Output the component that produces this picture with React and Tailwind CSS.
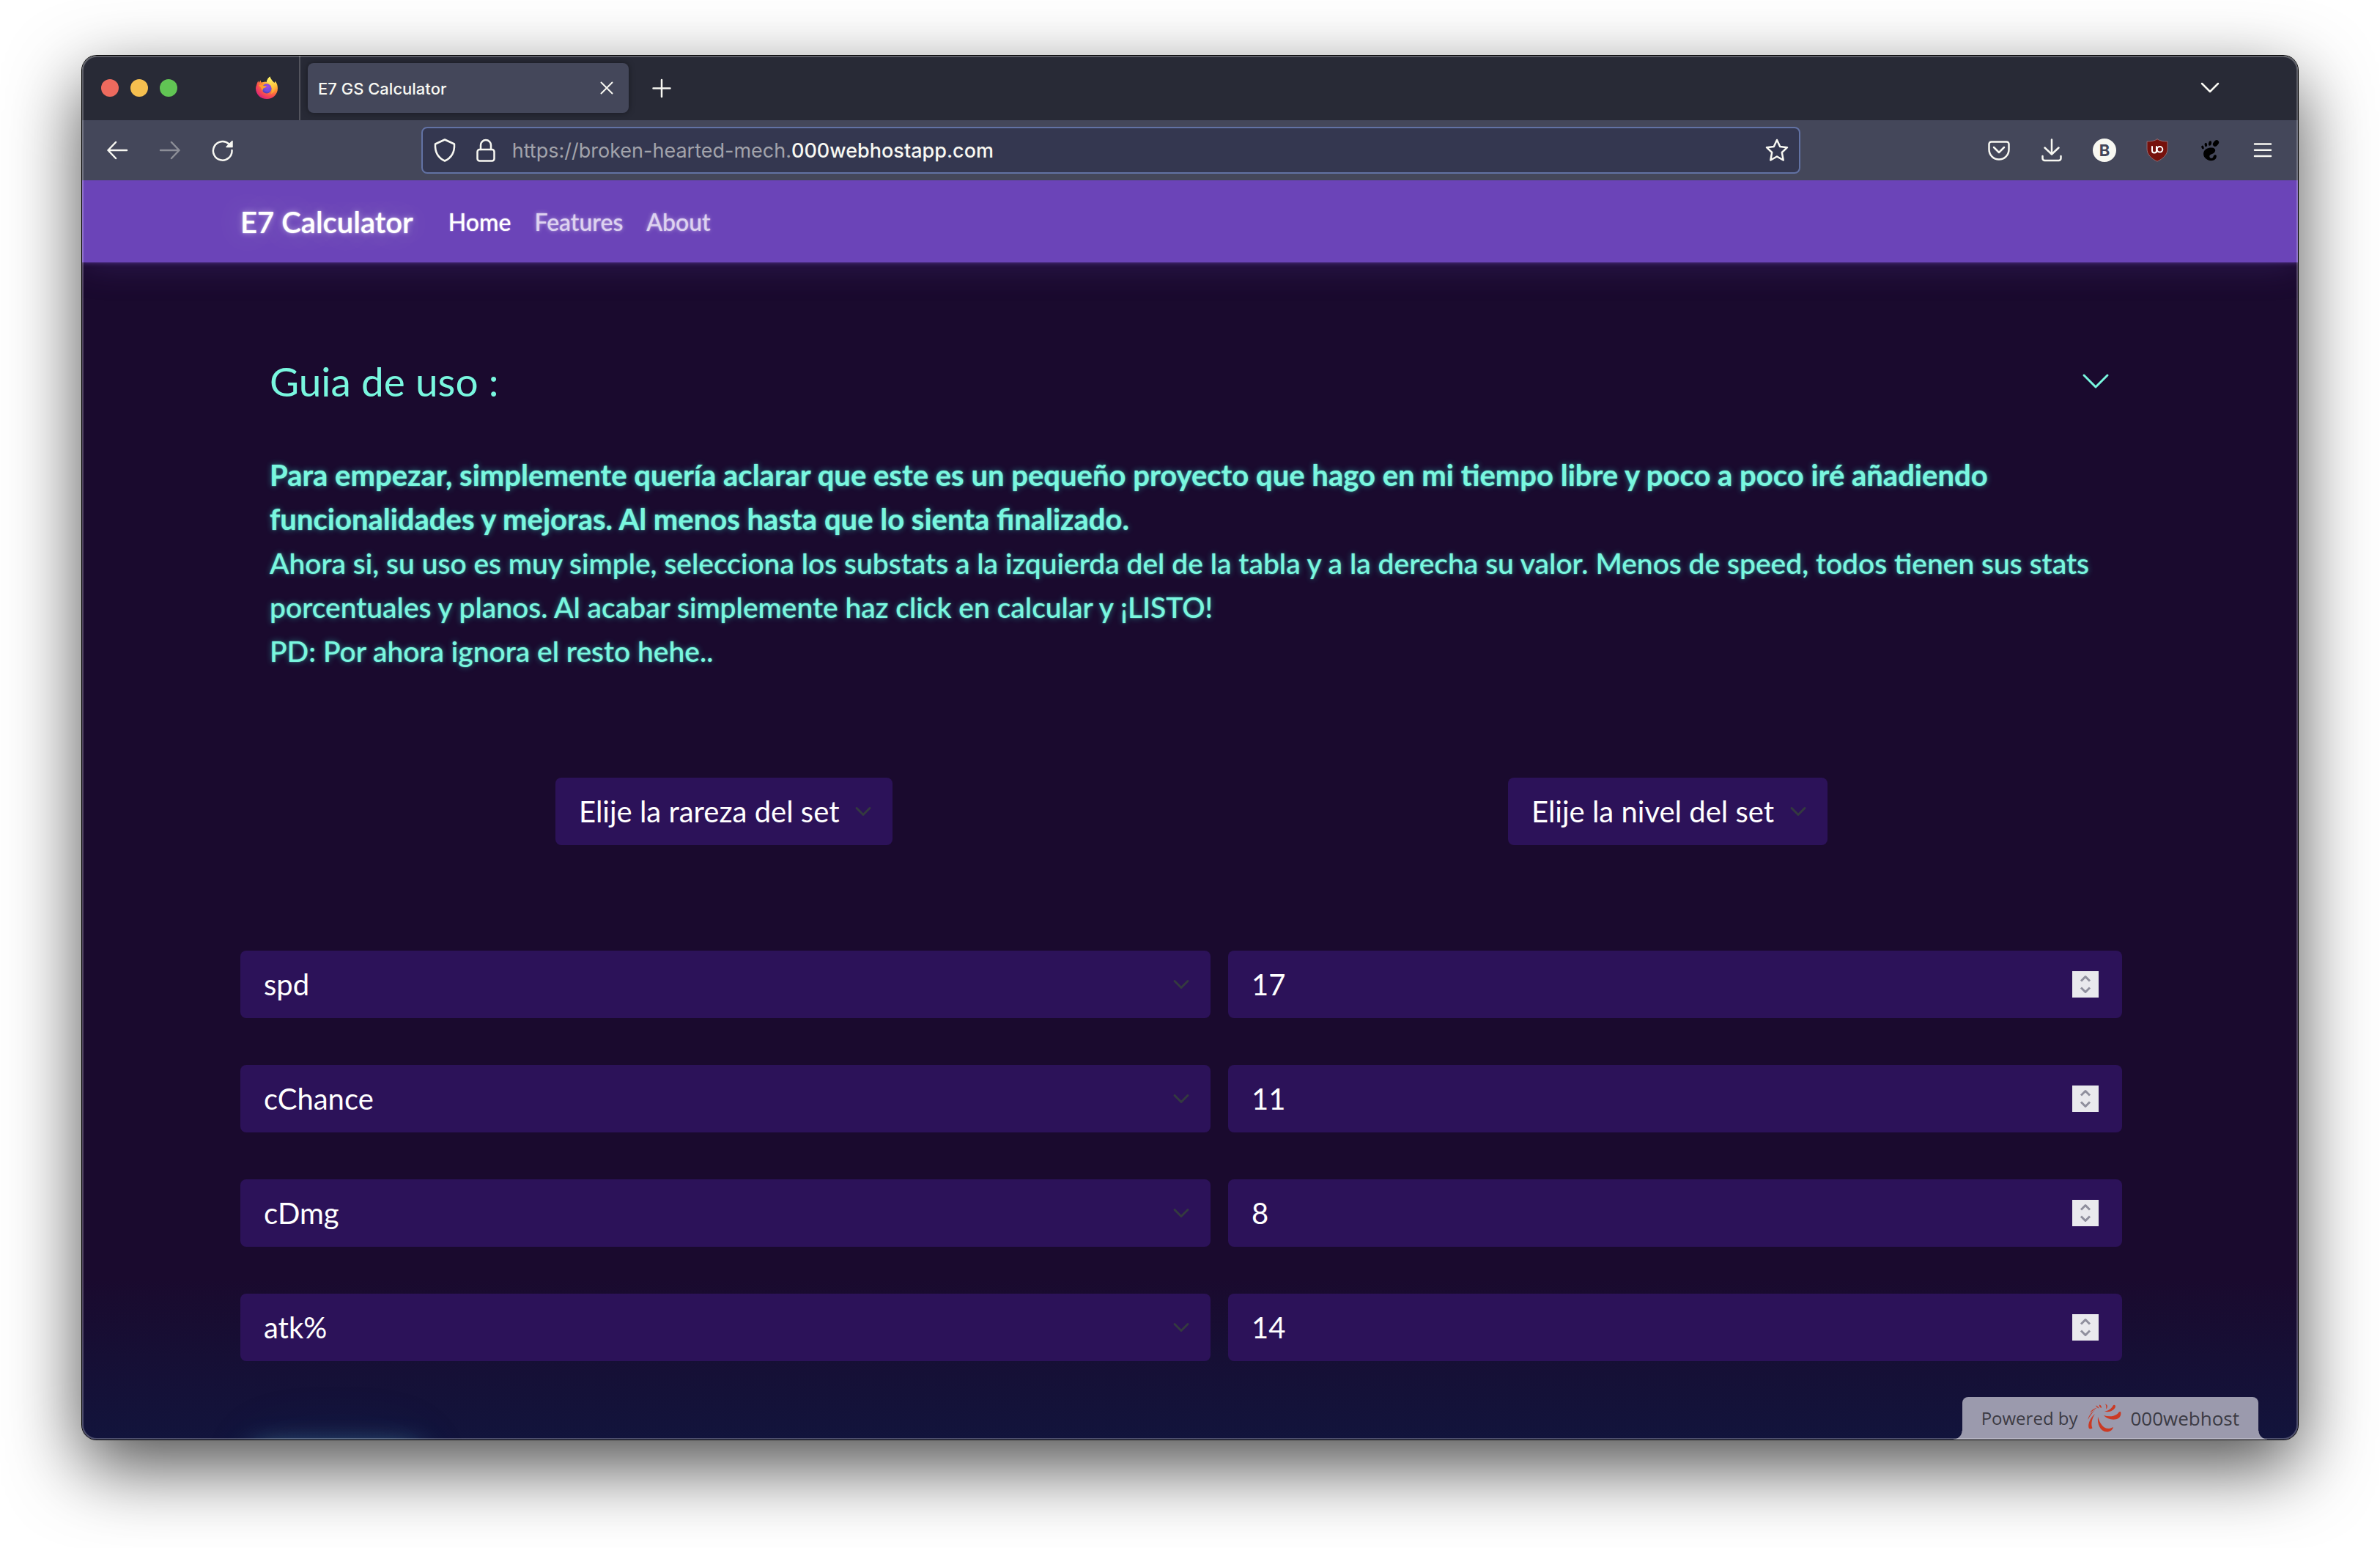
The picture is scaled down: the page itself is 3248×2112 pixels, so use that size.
import React from "react";

const ROWS = [
  { stat: "spd", value: 17 },
  { stat: "cChance", value: 11 },
  { stat: "cDmg", value: 8 },
  { stat: "atk%", value: 14 },
];

const line = {
  fill: "none",
  stroke: "currentColor",
  strokeLinecap: "round",
  strokeLinejoin: "round",
};

function Icon({ children, width = 2.5, className = "" }) {
  return (
    <svg viewBox="0 0 32 32" className={"size-8 shrink-0 " + className} {...line} strokeWidth={width} aria-hidden="true">
      {children}
    </svg>
  );
}

function FirefoxLogo() {
  return (
    <svg viewBox="0 0 32 32" className="size-8 shrink-0" role="img" aria-label="Firefox">
      <defs>
        <radialGradient id="ff-body" cx="0.78" cy="0.12" r="1">
          <stop offset="0" stopColor="#fff36b" />
          <stop offset="0.3" stopColor="#ffc53f" />
          <stop offset="0.55" stopColor="#ff8b33" />
          <stop offset="0.75" stopColor="#f84d4f" />
          <stop offset="1" stopColor="#d81f7c" />
        </radialGradient>
        <radialGradient id="ff-globe" cx="0.6" cy="0.3" r="0.8">
          <stop offset="0" stopColor="#a648e6" />
          <stop offset="0.6" stopColor="#6b4fdc" />
          <stop offset="1" stopColor="#463a9e" />
        </radialGradient>
        <linearGradient id="ff-flame" x1="0.4" y1="0" x2="0.7" y2="1">
          <stop offset="0" stopColor="#fff66b" />
          <stop offset="0.6" stopColor="#ffc83f" />
          <stop offset="1" stopColor="#ff9a33" />
        </linearGradient>
      </defs>
      <path
        d="M2 12.5 C2.6 9.6 3.4 8 4.6 6.6 L5.2 9 L7.6 5.6 L8.4 8.4 L11.4 8 C13.4 7.2 15 7.4 15.8 8 C16.4 4.600 18 2 20.400.4 C21.200 4.600 24.200 6.600 26.600 9 L27.600 6.800 C30 9.600 31 12.800 31 16.400 C31 24.800 24.400 31 16.200 31 C7.600 31 1 24.600 1 16.400 C1 15 1.400 13.600 2 12.500 Z"
        fill="url(#ff-body)"
      />
      <circle cx="16" cy="16.800" r="6.600" fill="url(#ff-globe)" />
      <path d="M15.800 8 C16.400 4.600 18 2 20.400 .4 C21.200 4.600 27.400 8.400 27.600 15 C27.700 19.400 25 23 21.600 24 C25.600 18 22.400 9.600 15.800 8 Z" fill="url(#ff-flame)" />
      <path d="M5 12.600 C7.400 10.800 10 11.600 11.800 13 L16 13.400 C15.800 15 13.600 15.600 12 16.200 C11 16.800 10.400 18.400 10.600 20 C8.400 18 8.600 15 5 12.600 Z" fill="#ff9d2f" />
    </svg>
  );
}

function TabStrip() {
  return (
    <div className="flex h-[88px] items-center bg-[#282a36] pl-[26px] text-[#f8f8f2]">
      <div className="flex gap-4">
        <button aria-label="Close window" className="size-6 rounded-full bg-[#ed6a5e]" />
        <button aria-label="Minimize window" className="size-6 rounded-full bg-[#f5bf4f]" />
        <button aria-label="Zoom window" className="size-6 rounded-full bg-[#61c554]" />
      </div>
      <button aria-label="Pinned tab" className="ml-[106px] mr-[28px]">
        <FirefoxLogo />
      </button>
      <div className="h-full w-[2px] bg-[#53545d]" />
      <div className="ml-[10px] flex h-[68px] w-[438px] items-center justify-between rounded-lg bg-[#44475a] pl-[14px] pr-[14px] shadow-[0_0_8px_rgba(0,0,0,0.4)]">
        <span className="pt-[2px] text-[22px] font-medium leading-8">E7 GS Calculator</span>
        <button aria-label="Close tab">
          <Icon width={2}>
            <path d="M8.500 8.500 L23.500 23.500 M23.500 8.500 L8.500 23.500" />
          </Icon>
        </button>
      </div>
      <button aria-label="New tab" className="ml-[29px]">
        <Icon>
          <path d="M16 5 V28 M4.500 16.500 H27.500" />
        </Icon>
      </button>
      <button aria-label="List all tabs" className="ml-auto mr-[104px]">
        <Icon>
          <path d="M5 10 L16 21 L27 10" />
        </Icon>
      </button>
    </div>
  );
}

function Toolbar() {
  return (
    <div className="flex h-[82px] items-center bg-[#44475a] pl-8 pr-8 text-[#f8f8f2]">
      <div className="flex gap-10">
        <button aria-label="Back">
          <Icon>
            <path d="M29 16 H3.500 M14 5 L3.500 16 L14 27" />
          </Icon>
        </button>
        <button aria-label="Forward" className="opacity-40" disabled>
          <Icon>
            <path d="M3 16 H28.500 M18 5 L28.500 16 L18 27" />
          </Icon>
        </button>
        <button aria-label="Reload">
          <Icon>
            <path d="M28.500 16 A12.800 12.800 0 1 1 24.500 7.500" />
            <path d="M29 3.500 V11.500 H21 Z" fill="currentColor" strokeWidth="1.500" />
          </Icon>
        </button>
      </div>
      <div className="mx-auto flex h-16 w-[63.6%] items-center rounded-lg border-2 border-[#6272a4] bg-[#343750] px-[14px]">
        <Icon className="mr-6">
          <path d="M16 1.500 L29 7.500 C29.500 17 26 26 16 30.500 C6 26 2.500 17 3 7.500 Z" />
        </Icon>
        <Icon className="mr-5">
          <rect x="4.500" y="15" width="23" height="15.500" rx="3" />
          <path d="M9 15 V9 A7 7 0 0 1 23 9 V15" />
        </Icon>
        <p className="flex-1 pt-[2px] text-[27px] leading-9 text-[#a2a3ab]">
          https://broken-hearted-mech.<span className="font-medium text-[#f8f8f2]">000webhostapp.com</span>
        </p>
        <button aria-label="Bookmark this page">
          <Icon>
            <path d="M16 2 L20.200 11 L30 12.200 L22.800 19 L24.700 29.500 L16 24.500 L7.300 29.500 L9.200 19 L2 12.200 L11.800 11 Z" />
          </Icon>
        </button>
      </div>
      <div className="flex gap-10">
        <button aria-label="Save to Pocket">
          <Icon>
            <path d="M5.500 4.500 H26.500 A3 3 0 0 1 29.500 7.500 V15 A13.500 13.500 0 0 1 2.500 15 V7.500 A3 3 0 0 1 5.500 4.500 Z M9 12 L16 19 L23 12" />
          </Icon>
        </button>
        <button aria-label="Downloads">
          <Icon>
            <path d="M16 1.500 V21 M6.500 12.500 L16 21.500 L25.500 12.500 M3.500 24 V27 A3 3 0 0 0 6.500 30 H25.500 A3 3 0 0 0 28.500 27 V24" />
          </Icon>
        </button>
        <button aria-label="Extension B" className="flex size-8 items-center justify-center rounded-full bg-[#f8f8f2] text-[22px] font-bold leading-8 text-[#44475a]">
          B
        </button>
        <button aria-label="uBlock Origin">
          <Icon>
            <path d="M16 .8 C19.500 3.200 24 4 30 4 V14 C30 22 24 27.500 16 31.200 C8 27.500 2 22 2 14 V4 C8 4 12.500 3.200 16 .8 Z" fill="#76110c" stroke="#8d6a72" strokeWidth="1" />
            <path d="M9 11 V16.500 A3 3 0 0 0 15 16.500 V11 V18.500" stroke="#fff" strokeWidth="2" />
            <circle cx="19.500" cy="14.800" r="3.800" stroke="#fff" strokeWidth="2" />
          </Icon>
        </button>
        <button aria-label="GNOME Shell integration">
          <svg viewBox="0 0 32 32" className="size-8" fill="#000" aria-hidden="true">
            <ellipse cx="24" cy="6.500" rx="3.300" ry="4.800" transform="rotate(42 24 6.500)" />
            <ellipse cx="16" cy="6.500" rx="2" ry="3.200" transform="rotate(10 16 6.500)" />
            <ellipse cx="10.400" cy="8.500" rx="1.800" ry="2.800" transform="rotate(-8 10.400 8.500)" />
            <ellipse cx="6" cy="12" rx="1.600" ry="2.500" transform="rotate(-22 6 12)" />
            <path d="M7.200 19.500 C8 14.500 14 12 19 12.600 C23.500 13.200 24.500 17 21.500 19.500 C19 21.500 15.500 21.500 15.300 24.300 C15.200 27 19 28 20.200 25.600 C21 24 21 22.300 23.300 22.300 C25.500 22.400 25 25.500 24 27.200 C22 30.500 16.500 31.200 12.600 29 C8.800 26.800 6.500 23.500 7.200 19.500 Z" />
          </svg>
        </button>
        <button aria-label="Open application menu">
          <Icon>
            <path d="M5 7.500 H27 M5 15.700 H27 M5 24 H27" />
          </Icon>
        </button>
      </div>
    </div>
  );
}

function SelectBox({ label, text, className = "", selectClassName = "" }) {
  return (
    <div className={"relative " + className}>
      <select
        aria-label={label}
        className={"block h-[92px] appearance-none rounded-lg bg-[#2c1259] pl-8 pr-[72px] text-[40px] leading-[60px] text-white " + selectClassName}
      >
        <option>{text}</option>
      </select>
      <svg viewBox="0 0 24 16" className="pointer-events-none absolute right-7 top-[38px] h-4 w-6 text-[#343a40]" {...line} strokeWidth="3" aria-hidden="true">
        <path d="M3 3.500 L12 12.500 L21 3.500" />
      </svg>
    </div>
  );
}

function NumberBox({ label, value }) {
  return (
    <div className="flex h-[92px] items-center rounded-lg bg-[#2c1259] pl-8 pr-8">
      <input
        aria-label={label}
        type="number"
        defaultValue={value}
        className="min-w-0 flex-1 bg-transparent text-[40px] leading-[60px] text-white outline-none [appearance:textfield] [&::-webkit-inner-spin-button]:appearance-none"
      />
      <svg viewBox="0 0 36 36" className="size-9 shrink-0 bg-[#e9e9ed] text-[#8f8f9d]" {...line} strokeWidth="3" strokeLinecap="butt" aria-hidden="true">
        <path d="M12 13.500 L18 7.500 L24 13.500 M12 22.500 L18 28.500 L24 22.500" />
      </svg>
    </div>
  );
}

function HostBadge() {
  return (
    <a
      href="#host"
      className="absolute bottom-0 right-[54px] flex h-[58px] items-center rounded-t-lg bg-[#9b9aad] px-[26px] font-['Open_Sans',sans-serif] text-[#3b3b44]"
    >
      <span className="absolute -left-3 bottom-0 size-3 bg-[radial-gradient(circle_at_0_0,transparent_11px,#9b9aad_12px)]" />
      <span className="absolute -right-3 bottom-0 size-3 bg-[radial-gradient(circle_at_100%_0,transparent_11px,#9b9aad_12px)]" />
      <span className="text-2xl leading-8">Powered by</span>
      <svg viewBox="0 0 48 40" className="mx-3 h-10 w-12" fill="#cb3a24" aria-hidden="true">
        <path d="M15 18 C14 28 18 38 27 38.500 C32 38.500 35 36 36 32 C31 35 25 35 21 30 C18 26.500 16 22 15 18 Z" />
        <path d="M23 16 C28 22 38 23 43 20 C46 18 47 14 46 11 C43.500 10.500 43 13 41 14.500 C36 18 29 18 23 16 Z" />
        <path d="M24 10.500 C30 13 38 9 39 4 C39 1.500 36.500 1 35.500 3 C33.500 7 29 10 24 10.500 Z" />
        <path d="M11 14 C5 19 1 27 2.500 33 C3.500 35 6 35 7.500 33.500 C5 28 7 20 11 14 Z" />
        <path d="M11 9 C6 12 2 17 1.500 22 C4 17 7 12.500 11 9 Z" />
        <path d="M14 5.500 C9 7 6 9 4 12.500 C7.500 10 10.500 8 14 5.500 Z" />
        <path d="M17 1.500 C19 2 20 3.500 20 6 C17.500 5 16.500 3.500 17 1.500 Z M25 .5 C28.500 1.500 29 5 26 7.500 C26.500 4.500 26.500 2.500 25 .5 Z M12 2.500 C14 3 16 4.500 16.500 6.500 C14.500 6 13 4.500 12 2.500 Z" />
      </svg>
      <span className="text-[26px] font-medium leading-8">000webhost</span>
    </a>
  );
}

function Page() {
  return (
    <div className="relative flex-1 overflow-hidden bg-[#1a0a2e] font-[Lato,sans-serif]">
      <div className="pointer-events-none absolute inset-x-0 bottom-0 h-[220px] bg-gradient-to-b from-[#12143c]/0 to-[#12143c]" />
      <div className="pointer-events-none absolute -bottom-16 left-[236px] h-12 w-[222px] rounded-lg shadow-[0_0_40px_rgba(90,180,210,0.9),0_0_100px_rgba(50,120,180,0.12)]" />

      <nav className="relative flex h-28 items-center bg-[#6b44b8] pl-[216px] pt-[2px] shadow-[0_0_6px_rgba(107,68,184,0.7),0_0_50px_rgba(107,68,184,0.3)]">
        <a href="#top" className="mr-12 text-[40px] font-semibold leading-[60px] text-white [text-shadow:0_0_2px_rgba(255,255,255,0.7),0_0_8px_rgba(255,255,255,0.4),0_0_40px_rgba(255,255,255,0.3)]">
          E7 Calculator
        </a>
        <div className="flex gap-8 text-[32px] font-medium leading-[48px] text-[#ddd2f0]">
          <a href="#home" className="text-white [text-shadow:0_0_2px_rgba(255,255,255,0.7)]">
            Home
          </a>
          <a href="#features" className="[text-shadow:0_0_2px_rgba(255,255,255,0.5),0_0_6px_rgba(255,255,255,0.4)]">
            Features
          </a>
          <a href="#about" className="[text-shadow:0_0_2px_rgba(255,255,255,0.5),0_0_6px_rgba(255,255,255,0.4)]">
            About
          </a>
        </div>
      </nav>

      <main className="relative px-[216px] pb-[107px] pt-[126px]">
        <section className="px-10 text-[#79f7df]">
          <button className="flex w-full items-center justify-between text-left">
            <h1 className="text-[55px] leading-[72px]">Guia de uso :</h1>
            <svg viewBox="0 0 40 24" className="h-6 w-10" {...line} strokeWidth="3" aria-hidden="true">
              <path d="M4 4 L20 20 L36 4" />
            </svg>
          </button>
          <div className="mt-[62px] text-[39px] font-medium leading-[60px] [text-shadow:0_0_2px_rgba(121,247,223,0.7),0_0_8px_rgba(50,251,226,0.45)]">
            <p className="text-[40px] font-bold">
              Para empezar, simplemente quería aclarar que este es un pequeño proyecto que hago en mi tiempo libre y poco a poco iré añadiendo
              funcionalidades y mejoras. Al menos hasta que lo sienta finalizado.
            </p>
            <p>
              Ahora si, su uso es muy simple, selecciona los substats a la izquierda del de la tabla y a la derecha su valor. Menos de speed, todos
              tienen sus stats porcentuales y planos. Al acabar simplemente haz click en calcular y ¡LISTO!
            </p>
            <p>PD: Por ahora ignora el resto hehe..</p>
          </div>
        </section>

        <form>
          <div className="mt-[143px] grid grid-cols-2 justify-items-center pl-4">
            <SelectBox label="Rareza" text="Elije la rareza del set" />
            <SelectBox label="Nivel" text="Elije la nivel del set" />
          </div>
          <div className="mt-36 flex flex-col gap-16 pr-6">
            {ROWS.map((row, i) => (
              <div key={row.stat} className="grid grid-cols-[1324fr_1220fr] gap-6">
                <SelectBox label={"Substat " + (i + 1)} text={row.stat} className="w-full" selectClassName="w-full" />
                <NumberBox label={"Valor " + (i + 1)} value={row.value} />
              </div>
            ))}
          </div>
        </form>
      </main>

      <HostBadge />
    </div>
  );
}

export default function App() {
  return (
    <div className="flex min-h-screen flex-col bg-white px-28 pb-[148px] pt-[76px] font-[Inter,sans-serif]">
      <div className="relative flex flex-1 flex-col rounded-[20px] shadow-[0_0_0_1px_#000,0_36px_100px_rgba(0,0,0,0.7)]">
        <div className="flex flex-1 flex-col overflow-hidden rounded-[20px]">
          <TabStrip />
          <Toolbar />
          <Page />
        </div>
        <div className="pointer-events-none absolute inset-0 rounded-[20px] shadow-[inset_0_0_0_2px_rgba(255,255,255,0.25)]" />
      </div>
    </div>
  );
}
